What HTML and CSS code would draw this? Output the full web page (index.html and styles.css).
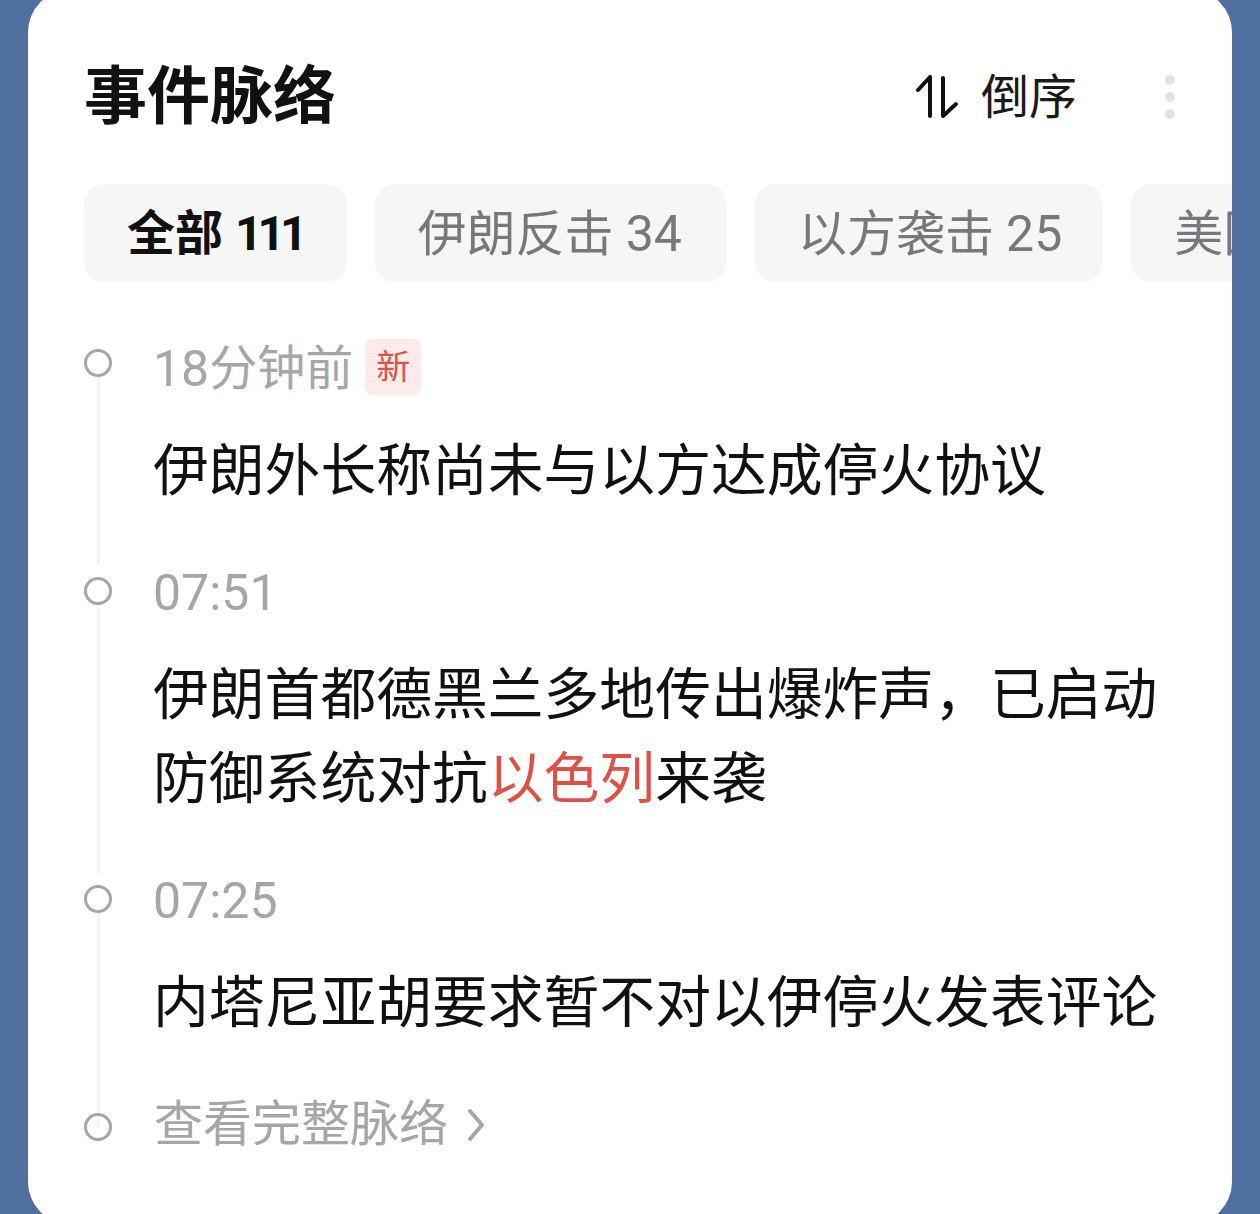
FILE: index.html
```html
<!DOCTYPE html>
<html lang="zh-CN">
<head>
    <meta charset="UTF-8">
    <meta name="viewport" content="width=device-width, initial-scale=1.0">
    <title>事件脉络</title>
    <link rel="stylesheet" href="styles.css">
</head>
<body>
    <div class="card">
        <div class="header">
            <h1 class="title">事件脉络</h1>
            <div class="sort">
                <svg class="sort-icon" width="44" height="44" viewBox="0 0 44 44" fill="none">
                    <path d="M3 15 L15 2 V41" />
                    <path d="M28 3 V41 L41 29" />
                </svg>
                <span>倒序</span>
            </div>
            <div class="more">
                <span></span>
                <span></span>
                <span></span>
            </div>
        </div>

        <div class="tabs">
            <div class="tab active">全部 <span class="count-tight">111</span></div>
            <div class="tab">伊朗反击 <span class="num">34</span></div>
            <div class="tab">以方袭击 <span class="num">25</span></div>
            <div class="tab">美国介入 <span class="num">12</span></div>
        </div>

        <div class="timeline">
            <div class="item first">
                <div class="rail"><i class="dot"></i><i class="line"></i></div>
                <div class="body">
                    <div class="time"><span class="num">18</span>分钟前<span class="badge">新</span></div>
                    <p class="text">伊朗外长称尚未与以方达成停火协议</p>
                </div>
            </div>
            <div class="item">
                <div class="rail"><i class="dot"></i><i class="line"></i></div>
                <div class="body">
                    <div class="time"><span class="num">07:51</span></div>
                    <p class="text">伊朗首都德黑兰多地传出爆炸声，已启动防御系统对抗<span class="hl">以色列</span>来袭</p>
                </div>
            </div>
            <div class="item">
                <div class="rail"><i class="dot"></i><i class="line"></i></div>
                <div class="body">
                    <div class="time"><span class="num">07:25</span></div>
                    <p class="text">内塔尼亚胡要求暂不对以伊停火发表评论</p>
                </div>
            </div>
            <div class="item last">
                <div class="rail"><i class="dot"></i></div>
                <div class="body">
                    <div class="more-link">查看完整脉络
                        <svg width="18" height="36" viewBox="0 0 18 36" fill="none">
                            <path d="M3 4 L15 18 L3 32" />
                        </svg>
                    </div>
                </div>
            </div>
        </div>
    </div>
</body>
</html>
```

FILE: styles.css
```css
* {
    margin: 0;
    padding: 0;
    box-sizing: border-box;
}

html, body {
    height: 1214px;
    overflow: hidden;
}

body {
    background: #4f6f9f;
    font-family: Roboto, "Noto Sans CJK SC", sans-serif;
    padding: 0 28px;
}

.card {
    height: 1234px;
    margin-top: -10px;
    background: #fff;
    border-radius: 42px;
    padding: 0 0 0 56px;
    overflow: hidden;
}

.header {
    display: flex;
    align-items: center;
    height: 194px;
    padding-top: 20px;
}

.title {
    font-size: 63px;
    font-weight: 700;
    line-height: 82px;
    color: #111;
    flex: 1;
}

.sort {
    display: flex;
    align-items: center;
    gap: 22px;
    font-size: 48px;
    color: #1a1a1a;
    margin-right: 88px;
}

.sort span {
    margin-bottom: 8px;
}

.sort-icon path {
    stroke: #111;
    stroke-width: 4;
    stroke-linecap: round;
    stroke-linejoin: round;
}

.more {
    display: flex;
    flex-direction: column;
    gap: 7px;
    margin-right: 57px;
}

.more span {
    width: 10px;
    height: 10px;
    border-radius: 50%;
    background: #e2e2e8;
}

.tabs {
    display: flex;
    gap: 28px;
    overflow: hidden;
}

.tab {
    flex: none;
    height: 98px;
    padding: 0 43px;
    border-radius: 20px;
    background: #f6f6f7;
    font-size: 49px;
    line-height: 100px;
    color: #77787c;
    white-space: nowrap;
}

.tab:nth-child(2) {
    padding-right: 45px;
}

.tab:nth-child(3) {
    padding-right: 41px;
}

.tab.active {
    padding-right: 44px;
    font-size: 48px;
    color: #111;
    font-weight: 700;
}

.num {
    font-size: 50px;
}

.count-tight {
    letter-spacing: -5px;
}

.timeline {
    margin-top: 57px;
}

.item {
    display: grid;
    grid-template-columns: 28px 1fr;
    column-gap: 41px;
}

.rail {
    display: flex;
    flex-direction: column;
    align-items: center;
    padding-top: 12px;
}

.first .rail {
    padding-top: 10px;
}

.last .rail {
    padding-top: 16px;
}

.first .body {
    padding-top: 2px;
}

.dot {
    flex: none;
    width: 28px;
    height: 28px;
    border: 3px solid #a5a6a9;
    border-radius: 50%;
    background: #fff;
}

.last .dot {
    background: none;
}

.line {
    flex: 1;
    width: 3px;
    background: #f3f3f4;
}

.item:nth-child(3) .line {
    margin-bottom: -30px;
}

.time {
    display: flex;
    align-items: center;
    height: 56px;
    font-size: 48px;
    line-height: 56px;
    color: #a5a6a9;
}

.badge {
    width: 56px;
    height: 56px;
    margin: -4px 0 0 12px;
    border-radius: 8px;
    background: #fcebea;
    color: #d5554b;
    font-size: 34px;
    line-height: 56px;
    text-align: center;
}

.text {
    margin-top: 32px;
    padding-bottom: 52px;
    width: 1010px;
    font-size: 55.8px;
    line-height: 84px;
    color: #111;
}

.hl {
    color: #dc5247;
}

.more-link {
    display: flex;
    align-items: center;
    gap: 19px;
    height: 56px;
    margin-left: 1px;
    font-size: 49px;
    line-height: 56px;
    color: #a5a6a9;
}

.more-link path {
    stroke: #a5a6a9;
    stroke-width: 4;
    stroke-linecap: round;
    stroke-linejoin: round;
}
```
